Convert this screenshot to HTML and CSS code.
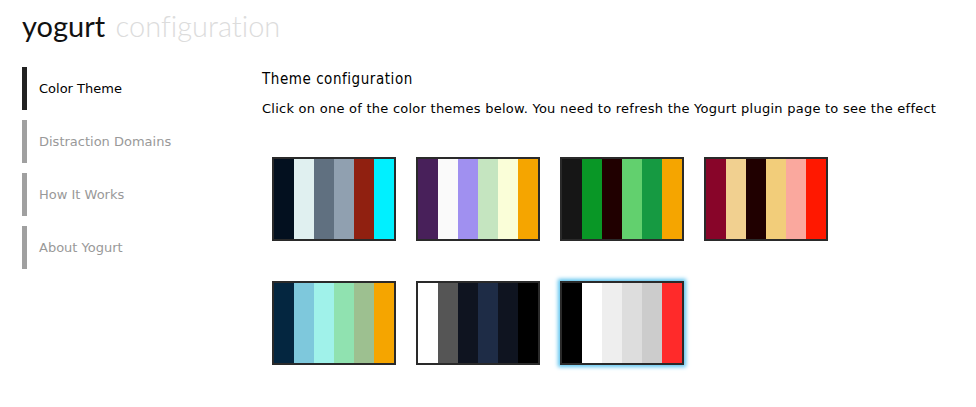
FILE: index.html
```html
<!DOCTYPE html>
<html>
<head>
<meta charset="utf-8">
<link rel="stylesheet" href="styles.css">
</head>
<body>
<header class="header">
  <h1 class="logo"><span class="logo-main">yogurt</span> <span class="logo-sub">configuration</span></h1>
</header>
<div class="layout">
  <nav class="sidebar">
    <a class="nav-item active">Color Theme</a>
    <a class="nav-item">Distraction Domains</a>
    <a class="nav-item">How It Works</a>
    <a class="nav-item">About Yogurt</a>
  </nav>
  <main class="content">
    <h2 class="title">Theme configuration</h2>
    <p class="desc">Click on one of the color themes below. You need to refresh the Yogurt plugin page to see the effect</p>
    <div class="themes">
      <div class="theme">
        <span style="background:#03101f"></span><span style="background:#e0f0f0"></span><span style="background:#607080"></span><span style="background:#90a0b0"></span><span style="background:#902010"></span><span style="background:#00f0ff"></span>
      </div>
      <div class="theme">
        <span style="background:#48205a"></span><span style="background:#fafafa"></span><span style="background:#a090f0"></span><span style="background:#c5e5c0"></span><span style="background:#fafed8"></span><span style="background:#f5a500"></span>
      </div>
      <div class="theme">
        <span style="background:#161616"></span><span style="background:#099726"></span><span style="background:#200000"></span><span style="background:#62d06e"></span><span style="background:#169a42"></span><span style="background:#f5a500"></span>
      </div>
      <div class="theme">
        <span style="background:#880529"></span><span style="background:#f1d090"></span><span style="background:#200000"></span><span style="background:#f2cd7a"></span><span style="background:#faa89e"></span><span style="background:#ff1800"></span>
      </div>
      <div class="theme">
        <span style="background:#042640"></span><span style="background:#7ec8dc"></span><span style="background:#a0f2ea"></span><span style="background:#90e2b0"></span><span style="background:#9dc090"></span><span style="background:#f5a500"></span>
      </div>
      <div class="theme">
        <span style="background:#ffffff"></span><span style="background:#555555"></span><span style="background:#0f1420"></span><span style="background:#1e2c46"></span><span style="background:#0f1420"></span><span style="background:#000000"></span>
      </div>
      <div class="theme selected">
        <span style="background:#000000"></span><span style="background:#ffffff"></span><span style="background:#eeeeee"></span><span style="background:#dddddd"></span><span style="background:#cccccc"></span><span style="background:#ff2a2a"></span>
      </div>
    </div>
  </main>
</div>
</body>
</html>
```
FILE: styles.css
```css
html, body {
  margin: 0;
  padding: 0;
  background: #ffffff;
}
body {
  font-family: "DejaVu Sans", Verdana, sans-serif;
}
.header {
  padding: 9px 22px 0;
  height: 58px;
  box-sizing: border-box;
}
.logo {
  margin: 0;
  font-family: "Lato", "Noto Sans", sans-serif;
  font-weight: 400;
  font-size: 29px;
  line-height: 34px;
  word-spacing: 3px;
  font-variant-ligatures: none;
}
.logo-main { color: #111111; }
.logo-sub { color: #dcdcdc; font-weight: 300; }
.layout {
  display: flex;
  padding: 9px 0 0 22px;
}
.sidebar {
  width: 240px;
  flex: none;
  display: flex;
  flex-direction: column;
  gap: 10px;
}
.nav-item {
  display: flex;
  align-items: center;
  height: 43px;
  border-left: 5px solid #a0a0a0;
  padding-left: 12px;
  font-size: 13px;
  color: #999999;
}
.nav-item.active {
  border-left-color: #222222;
  color: #000000;
}
.content {
  flex: 1;
  padding-top: 3px;
}
.title {
  margin: 0;
  font-family: "DejaVu Sans Condensed", "DejaVu Sans", sans-serif;
  font-weight: 400;
  font-size: 15px;
  letter-spacing: 0.55px;
  line-height: 18px;
  color: #000000;
}
.desc {
  margin: 13px 0 0;
  font-size: 13px;
  letter-spacing: 0.25px;
  line-height: 16px;
  color: #000000;
}
.themes {
  display: flex;
  flex-wrap: wrap;
  width: 576px;
  margin-top: 20px;
}
.theme {
  display: flex;
  border: 2px solid #2a2a2a;
  margin: 20px 10px;
  width: 120px;
  height: 80px;
}
.theme span {
  flex: 1;
}
.theme.selected {
  box-shadow: 0 0 4px 2px #5cc3ee;
}
```
